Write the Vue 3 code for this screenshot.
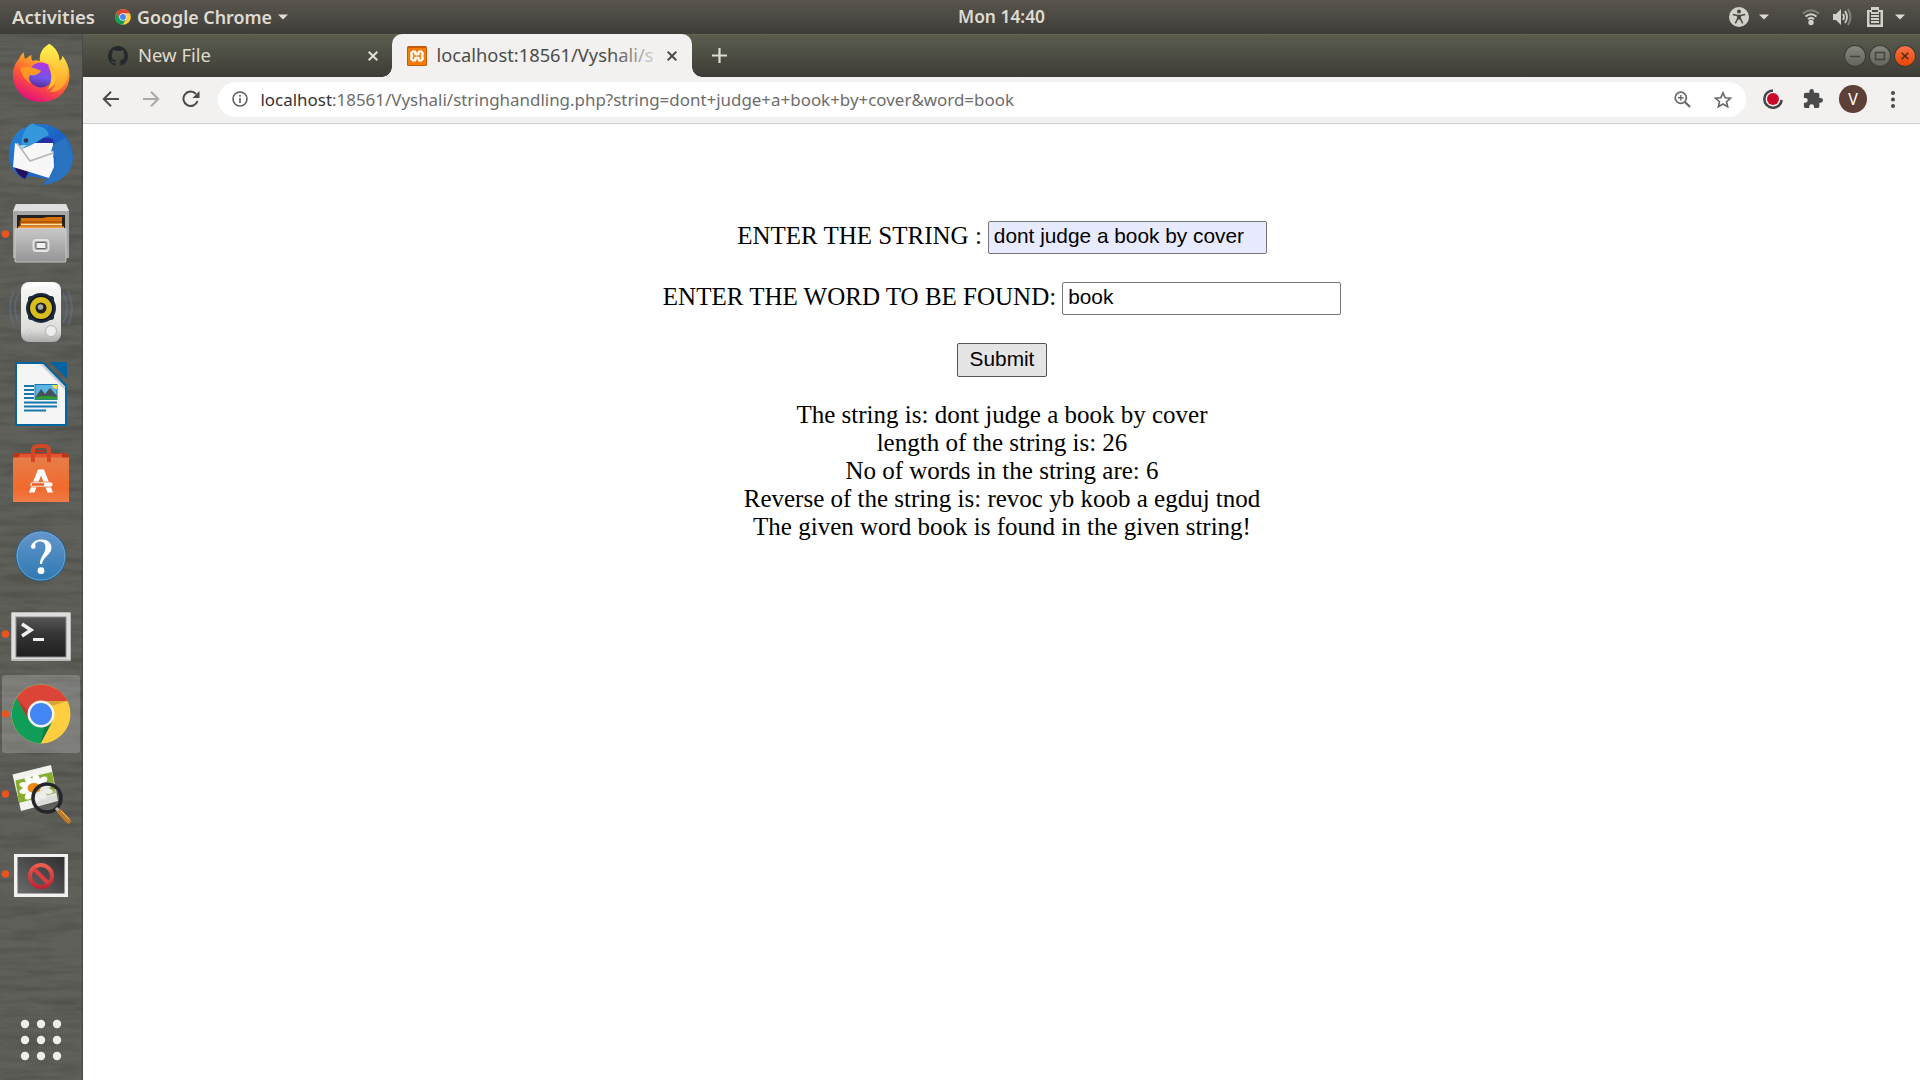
<script setup>
const results = [
  'The string is: dont judge a book by cover',
  'length of the string is: 26',
  'No of words in the string are: 6',
  'Reverse of the string is: revoc yb koob a egduj tnod',
  'The given word book is found in the given string!'
]
const gridDots = [24, 40, 56].flatMap((y) => [25, 41, 57].map((x) => ({ x, y })))
const petals = [0, 36, 72, 108, 144, 180, 216, 252, 288, 324]
</script>

<template>
  <div class="desktop">
    <header class="topbar">
      <div class="side">
        <svg class="activities" width="86" height="34"><text x="0" y="23.5" textLength="83" lengthAdjust="spacingAndGlyphs">Activities</text></svg>
        <svg class="mini" width="16" height="16" viewBox="0 0 60 60">
          <circle cx="30" cy="30" r="29.5" fill="#ffcd40" />
          <path d="M4.5 15A29.5 29.5 0 0 1 55.500 16H30L18 36.500Z" fill="#db4437" />
          <path d="M4.500 15A29.500 29.500 0 0 0 29 59.500L42 37L18 37Z" fill="#0f9d58" />
          <circle cx="30" cy="30" r="14" fill="#f1f1f1" /><circle cx="30" cy="30" r="11" fill="#4285f4" />
        </svg>
        <svg class="app" width="138" height="34"><text x="0" y="23.500" textLength="135" lengthAdjust="spacingAndGlyphs">Google Chrome</text></svg>
        <svg class="tri" width="10" height="6"><path d="M0 .5H10L5 5.500Z" /></svg>
      </div>
      <svg width="88" height="34"><text x="0" y="23" textLength="87" lengthAdjust="spacingAndGlyphs">Mon 14:40</text></svg>
      <div class="side status">
        <svg width="20" height="20" viewBox="0 0 20 20"><circle cx="10" cy="10" r="10" fill="#d3d0ca" /><circle cx="10" cy="4.600" r="2" fill="#4a4741" /><path d="M3.800 7.500L8.500 8.400h3L16.200 7.500M8.700 8.500V11.500L6.300 16.300M11.300 8.500V11.500L13.700 16.300" fill="none" stroke="#4a4741" stroke-width="1.500" /><path d="M8 8h4v4.500H8z" fill="#4a4741" /></svg>
        <svg class="t1" width="10" height="6"><path d="M0 .5H10L5 5.500Z" /></svg>
        <svg class="wifi" width="18" height="18" viewBox="0 0 18 18" fill="none" stroke-width="2"><path d="M1 5.500Q9-1 17 5.500" stroke="#84827c" /><path d="M3.500 8.500Q9 4 14.500 8.500M6 11.200Q9 8.500 12 11.200" stroke="#d3d0ca" /><circle cx="9" cy="14.500" r="2.700" fill="#d3d0ca" /></svg>
        <svg class="vol" width="20" height="18" viewBox="0 0 20 18" fill="none" stroke-width="2"><path d="M1 6h3l5-5v16l-5-5H1z" fill="#d3d0ca" /><path d="M11 6q2 3 0 6M13 3q4 6 0 12" stroke="#d3d0ca" stroke-width="1.800" /><path d="M16 1q5 8 0 16" stroke="#84827c" /></svg>
        <svg class="bat" width="16" height="20" viewBox="0 0 16 20"><path d="M4 0h8v3h4v17H0V3h4z" fill="#d3d0ca" /><path d="M2.500 5H5V3h6v2h2.500v12.500h-11z" fill="#4a4741" /><path d="M4 6h8M4 9h8M4 12h8M4 15h8" stroke="#d3d0ca" stroke-width="1.800" /></svg>
        <svg class="t2" width="10" height="6"><path d="M0 .5H10L5 5.500Z" /></svg>
      </div>
    </header>

    <div class="workspace">
      <nav class="dock">
        <svg class="grain" width="82" height="1046">
          <filter id="wood" x="0" y="0" width="100%" height="100%" color-interpolation-filters="sRGB"><feTurbulence type="fractalNoise" baseFrequency="0.02 0.14" numOctaves="4" seed="8" /><feColorMatrix values="0 0 0 0 .17  0 0 0 0 .17  0 0 0 0 .15  2.2 0 0 0 -.85" /></filter>
          <rect width="82" height="1046" filter="url(#wood)" />
        </svg>
        <div class="apps">
          <!-- Firefox -->
          <svg class="item" viewBox="0 0 82 80">
            <defs>
              <linearGradient id="ffb" x1=".8" y1="0" x2=".35" y2="1"><stop offset="0" stop-color="#ffe93e" /><stop offset=".35" stop-color="#ffab26" /><stop offset=".65" stop-color="#ff5636" /><stop offset="1" stop-color="#e3107b" /></linearGradient>
              <linearGradient id="ffy" x1="0" y1="0" x2="0" y2="1"><stop offset="0" stop-color="#fff44f" /><stop offset="1" stop-color="#ff9a2a" /></linearGradient>
              <linearGradient id="ffp" x1=".6" y1="0" x2=".4" y2="1"><stop offset="0" stop-color="#b833e1" /><stop offset=".6" stop-color="#7156e8" /><stop offset="1" stop-color="#592a9c" /></linearGradient>
            </defs>
            <path d="M49.500 10C55 14 59 18 59.500 27C62 26 62 24 62.500 22C67 28 69.500 34 69.500 41C69.500 57 57 68 41 68S13 56 13 41C13 33 16 28 19 25C20 22 21 20 24 18.500C24 21 24 23 25.500 25C28 23 29 22 31.500 21C31 24 31.500 26 32.500 27C35 26 37 26 40 27C39 20 43 13 49.500 10Z" fill="url(#ffb)" />
            <path d="M49.500 10C55 14 59 18 59.500 27C62 26 62 24 62.500 22C67 29 69 36 67 44C65 53 58 59 50 58C57 51 58 42 54 35C51 30 44 29 40 27C39 20 43 13 49.500 10Z" fill="url(#ffy)" />
            <circle cx="41" cy="41" r="12.500" fill="url(#ffp)" />
            <path d="M20 34Q30 31 41 37Q38 42 30 41Q27 44 31 50Q22 44 20 34Z" fill="#ff9822" />
            <path d="M48 31Q59 36 56 47Q54 53 47 56Q55 45 48 31Z" fill="#ffc22e" />
          </svg>
          <!-- Thunderbird -->
          <svg class="item" viewBox="0 0 82 80">
            <defs><linearGradient id="tb" x1="0" y1="0" x2="1" y2="1"><stop offset="0" stop-color="#258bd7" /><stop offset=".5" stop-color="#1c5fc4" /><stop offset="1" stop-color="#2d7cc4" /></linearGradient></defs>
            <path d="M31 12C47 5 73 18 73 43C73 58 62 69 42 71Q46 68 47 65L30 62L24 65C14 60 9 51 9 42C9 27 16 14 31 12Z" fill="url(#tb)" />
            <path d="M14 52L29 57L25 65Q17 61 14 52Z" fill="#25105c" />
            <path d="M30 28Q39 21 53 25L54 34H29Z" fill="#2030a0" />
            <path d="M15 29L22 33L34 29H53L54 53L49 64L13 53Z" fill="#f7f7f8" />
            <path d="M17 29L30 47L53 39" fill="none" stroke="#b5b5ba" stroke-width="1.500" />
            <path d="M53 31L51 38L55 36L53 44L57 41L54 53L58 50L52 61L57 58L44 70Q70 66 73 44L66 23Z" fill="#2a73c0" />
            <path d="M28 12Q32 7 37 12Q47 13 49 21Q42 24 37 28Q30 32 22 35Q19 24 28 12Z" fill="#3597dc" />
            <circle cx="26" cy="26.500" r="2.300" fill="#29374a" /><path d="M20 31L22 35L27 31Z" fill="#a4d5ee" />
          </svg>
          <!-- Files -->
          <svg class="item" viewBox="0 0 82 80">
            <defs><linearGradient id="fl" x1="0" y1="0" x2="0" y2="1"><stop offset="0" stop-color="#c8c8c8" /><stop offset="1" stop-color="#949494" /></linearGradient></defs>
            <path d="M16 10H66L69 17V64H13V17Z" fill="#a7a7a7" /><path d="M16 10H66L69 17H13Z" fill="#dedede" />
            <path d="M17 21H65V36H17Z" fill="#24201c" />
            <path d="M21 24H43L47 23H62V37H19Z" fill="#d4710b" /><path d="M19 28H62M19 31H63" stroke="#8d4207" stroke-width="1" /><path d="M21 30.500H62" stroke="#ffe0a5" stroke-width="1.500" /><path d="M18 34H64" stroke="#f29a3e" stroke-width="3" />
            <rect x="15" y="34.500" width="51" height="33.500" rx="1" fill="url(#fl)" stroke="#d2d2d2" stroke-width=".8" />
            <rect x="33.500" y="46" width="15" height="11" rx="2.500" fill="#aaa" stroke="#e5e5e5" stroke-width="1.800" /><rect x="36" y="48.500" width="10" height="6" rx="1" fill="#f2f2f2" stroke="#666" />
            <circle cx="5.500" cy="40" r="3.700" fill="#e95420" />
          </svg>
          <!-- Rhythmbox -->
          <svg class="item" viewBox="0 0 82 80">
            <defs><linearGradient id="rb" x1="0" y1="0" x2="0" y2="1"><stop offset="0" stop-color="#fafafa" /><stop offset=".8" stop-color="#dcdcda" /><stop offset="1" stop-color="#aaa" /></linearGradient></defs>
            <g fill="none" stroke="#5f7fa3" stroke-width="1.500" opacity=".45"><path d="M19 19Q11 34 19 49M14 17Q6 34 14 51M63 19Q71 34 63 49M68 17Q76 34 68 51" /></g>
            <rect x="21" y="8" width="40" height="60" rx="8" fill="url(#rb)" /><path d="M25 14Q41 6 57 14" stroke="#fff" stroke-width="3" fill="none" />
            <rect x="28" y="22" width="26" height="24" rx="3" fill="#1d2630" /><circle cx="41" cy="34" r="15" fill="#1c2a40" /><circle cx="41" cy="34" r="12.500" fill="#111" /><circle cx="41" cy="34" r="11" fill="#d8bd21" /><circle cx="41" cy="34" r="5.500" fill="#222" /><circle cx="40.500" cy="33" r="2.800" fill="#aaa" />
            <circle cx="51" cy="57" r="5.500" fill="#eee" stroke="#b3b3b1" /><circle cx="29" cy="58" r="2" fill="#ddd" stroke="#c8c8c8" />
          </svg>
          <!-- Writer -->
          <svg class="item" viewBox="0 0 82 80">
            <path d="M16 8H44L67 31V71Q67 72 66 72H16Q15 72 15 71V9Q15 8 16 8Z" fill="#02659f" />
            <path d="M17 10H43L65 32.500V70H17Z" fill="#f5f5f5" /><path d="M43 10L65 32.500V36L40 10Z" fill="#c7cfd4" />
            <path d="M50 8H66L67 9V25Z" fill="#0363a3" />
            <path d="M24 32H34M24 36H34M24 40H34M24 44H34M24 48.500H57M24 52.500H57M24 56.500H46" stroke="#1675ad" stroke-width="2" />
            <rect x="35" y="30.500" width="22" height="15" fill="#5cb5e4" stroke="#187ab4" /><path d="M35.500 43L41 35L45 40L50 34L57 42V45H36Z" fill="#46525a" /><path d="M36 43Q45 41 57 43V45.500H36Z" fill="#339a36" /><path d="M52 31H57V35Q53 35 52 31Z" fill="#ffe14b" />
          </svg>
          <!-- Software -->
          <svg class="item" viewBox="0 0 82 80">
            <defs><linearGradient id="sw" x1="0" y1="0" x2="0" y2="1"><stop offset="0" stop-color="#e67d48" /><stop offset=".7" stop-color="#f16a2c" /><stop offset="1" stop-color="#ee7c48" /></linearGradient></defs>
            <path d="M14 19H68L69 24H13Z" fill="#b9371b" /><path d="M20 20H62V24H18Z" fill="#e5542c" /><rect x="13" y="23.500" width="56" height="44.500" fill="url(#sw)" />
            <path d="M33 28V17Q33 12 38 12H44Q49 12 49 17V28" fill="none" stroke="#d24824" stroke-width="4" /><path d="M36 17H46" stroke="#b5371b" stroke-width="2" />
            <path d="M29 58.500L38 35.500H44L53 58.500H47.500L41 41.500L34.500 58.500Z" fill="#fff" /><rect x="30" y="48" width="23" height="5" rx="2.500" fill="#fff" stroke="#ee6c30" stroke-width=".8" /><path d="M32 50.500H44" stroke="#e8592a" stroke-width="2.500" />
          </svg>
          <!-- Help -->
          <svg class="item" viewBox="0 0 82 80">
            <defs><linearGradient id="hp" x1="0" y1="0" x2="0" y2="1"><stop offset="0" stop-color="#6397cb" /><stop offset="1" stop-color="#2e78b2" /></linearGradient></defs>
            <circle cx="41" cy="42" r="25" fill="url(#hp)" stroke="#235f91" /><circle cx="41" cy="42" r="24" fill="none" stroke="#77a9d5" stroke-width=".8" />
            <path d="M31 32C32.500 28 36 25.500 41.500 25.500C47.500 25.500 51.500 28.500 51.500 33.500C51.500 41 43.500 42 42 50H40C39.500 43 45.500 40 45.500 33.500C45.500 29.500 43.500 27.500 40 27.500C37 27.500 34.500 29 35.500 32C36 36 30 35.500 31 32Z" fill="#fff" /><circle cx="41" cy="56.700" r="3.400" fill="#fff" />
          </svg>
          <!-- Terminal -->
          <svg class="item" viewBox="0 0 82 80">
            <defs><linearGradient id="tm" x1="0" y1="0" x2="0" y2="1"><stop offset="0" stop-color="#555" /><stop offset=".4" stop-color="#363636" /><stop offset="1" stop-color="#1f1f1f" /></linearGradient></defs>
            <rect x="11" y="18" width="60" height="49" rx="1.500" fill="#b9b9b9" /><rect x="12" y="19" width="58" height="46" fill="#dedede" /><rect x="15.500" y="22.500" width="51" height="41" fill="#888" /><rect x="16.500" y="23.500" width="49" height="39" fill="url(#tm)" />
            <path d="M22 30L31 36L22 42" fill="none" stroke="#f0f0f0" stroke-width="3.500" /><path d="M33 45.500H44" stroke="#f0f0f0" stroke-width="3" />
            <circle cx="5.500" cy="40" r="3.700" fill="#e95420" />
          </svg>
          <!-- Chrome -->
          <svg class="item" viewBox="0 0 82 80">
            <rect x="2" y="1" width="78" height="78" rx="3" fill="#fff" fill-opacity=".2" />
            <circle cx="41" cy="40" r="29.500" fill="#ffcd40" />
            <path d="M16.500 24A29.500 29.500 0 0 1 67.500 27H41L29 46Z" fill="#db4437" />
            <path d="M16.500 24A29.500 29.500 0 0 0 40.500 69.500L52 48L41 52L29 46Z" fill="#0f9d58" />
            <path d="M41 27H67L52 32Z" fill="#dba733" /><path d="M16.500 24L29 38L28 45Z" fill="#b33b2d" /><path d="M52 48L40.500 69.500L44 53Z" fill="#0c8047" />
            <circle cx="41" cy="40" r="13.500" fill="#f4f4f4" /><circle cx="41" cy="40" r="11" fill="#4285f4" />
            <circle cx="5.500" cy="40" r="3.700" fill="#e95420" />
          </svg>
          <!-- Image viewer -->
          <svg class="item" viewBox="0 0 82 80">
            <path d="M12.500 20.500L51 11L58 47L21 57Z" fill="#f2f2ee" /><path d="M15.500 26.500L52 18L56 39L19 49Z" fill="#86ad2e" />
            <g transform="translate(36 34)" fill="#fff"><ellipse v-for="a in petals" :key="a" cx="0" cy="-9" rx="3.200" ry="5.500" :transform="`scale(1.2 .95) rotate(${a})`" /><ellipse cx="-2" rx="6.500" ry="5" fill="#e88a13" /></g>
            <circle cx="47" cy="44" r="14" fill="#60645a" fill-opacity=".15" stroke="#24272a" stroke-width="3.500" /><path d="M37 47Q44 36 57 39" stroke="#fff" stroke-opacity=".25" stroke-width="6" fill="none" />
            <path d="M56 54L60 58" stroke="#bbb" stroke-width="3" /><path d="M60 58L68.500 67" stroke="#c37a26" stroke-width="5" stroke-linecap="round" /><path d="M61 57L69 65" stroke="#efbd6c" stroke-width="1" />
            <circle cx="5.500" cy="40" r="3.700" fill="#e95420" />
          </svg>
          <!-- Blocked display -->
          <svg class="item" viewBox="0 0 82 80">
            <defs><linearGradient id="bd" x1="0" y1="1" x2="1" y2="0"><stop offset="0" stop-color="#6b6b6b" /><stop offset="1" stop-color="#2f2f2f" /></linearGradient><linearGradient id="br" x1="0" y1="0" x2="0" y2="1"><stop offset="0" stop-color="#ef6150" /><stop offset="1" stop-color="#bd1f33" /></linearGradient></defs>
            <rect x="14" y="20" width="54" height="43" fill="#f1f1f1" /><rect x="17.500" y="23" width="47" height="36.500" fill="url(#bd)" />
            <path fill-rule="evenodd" d="M41 29A13 13 0 1 0 41 55A13 13 0 1 0 41 29ZM41 33A9 9 0 1 1 41 51A9 9 0 1 1 41 33Z" fill="url(#br)" /><path d="M34 35L48 49" stroke="#dc3c40" stroke-width="4" />
            <circle cx="5.500" cy="40" r="3.700" fill="#e95420" />
          </svg>
        </div>
        <svg class="item" viewBox="0 0 82 80"><circle v-for="d in gridDots" :key="`${d.x}-${d.y}`" :cx="d.x" :cy="d.y" r="4.200" fill="#eeeeec" /></svg>
      </nav>

      <section class="browser">
        <div class="tabs">
          <div class="tab idle">
            <svg width="20" height="20" viewBox="0 0 16 16"><path fill="#24292e" d="M8 0C3.580 0 0 3.580 0 8c0 3.540 2.290 6.530 5.470 7.590.4.070.55-.17.55-.38 0-.19-.01-.82-.01-1.490-2.010.37-2.530-.49-2.690-.94-.09-.23-.48-.94-.82-1.130-.28-.15-.68-.52-.01-.53.63-.01 1.080.58 1.230.82.72 1.210 1.870.87 2.330.66.070-.52.28-.87.51-1.070-1.780-.2-3.640-.89-3.640-3.950 0-.87.31-1.590.82-2.150-.08-.2-.36-1.020.08-2.120 0 0 .67-.21 2.200.82.64-.18 1.320-.27 2-.27s1.360.09 2 .27c1.530-1.040 2.200-.82 2.200-.82.44 1.100.16 1.920.08 2.120.51.56.82 1.270.82 2.150 0 3.070-1.870 3.750-3.650 3.950.29.25.54.73.54 1.480 0 1.070-.01 1.930-.01 2.200 0 .21.15.46.55.38A8.010 8.010 0 0 0 16 8c0-4.420-3.580-8-8-8Z" /></svg>
            <svg class="label" width="230" height="43"><text x="0" y="27.500" textLength="73" lengthAdjust="spacingAndGlyphs">New File</text></svg>
            <svg class="close" width="10" height="10"><path d="M.7.7L9.300 9.300M9.300.7L.7 9.300" /></svg>
          </div>
          <div class="tab active">
            <svg width="20" height="20" viewBox="0 0 20 20"><rect width="20" height="20" rx="1.500" fill="#c65a05" /><rect x="1" y="2" width="18" height="17" rx="1" fill="#f57a08" /><path d="M6 5.500Q9 5 8.500 8Q10 8.800 11.500 8Q11 5 14 5.500Q17 7 14.800 10Q17 13 14 14.500Q11 15 11.500 12Q10 11.200 8.500 12Q9 15 6 14.500Q3 13 5.200 10Q3 7 6 5.500Z" fill="none" stroke="#fff" stroke-width="2.400" /></svg>
            <svg class="label" width="220" height="43">
              <defs><linearGradient id="fade" gradientUnits="userSpaceOnUse" x1="175" y1="0" x2="219" y2="0"><stop offset="0" stop-color="#4b4b49" /><stop offset="1" stop-color="#4b4b49" stop-opacity=".15" /></linearGradient></defs>
              <text x="-.5" y="27.500" textLength="217" lengthAdjust="spacingAndGlyphs" fill="url(#fade)">localhost:18561/Vyshali/s</text>
            </svg>
            <svg class="close" width="10" height="10"><path d="M.7.7L9.300 9.300M9.300.7L.7 9.300" /></svg>
          </div>
          <svg class="plus" width="15" height="15"><path d="M7.500 0V15M0 7.500H15" stroke="#deddd0" stroke-width="2.200" /></svg>
          <div class="winbtns">
            <span class="wb"><svg width="20" height="20"><path d="M5 10.500H15" stroke="#42433c" stroke-width="1.500" /></svg></span>
            <span class="wb"><svg width="20" height="20"><rect x="5.500" y="6.500" width="9" height="7" fill="none" stroke="#42433c" stroke-width="1.500" /></svg></span>
            <span class="wb x"><svg width="20" height="20"><path d="M6.700 6.700L13.300 13.300M13.300 6.700L6.700 13.300" stroke="#512515" stroke-width="1.500" /></svg></span>
          </div>
        </div>

        <div class="toolbar">
          <svg class="back" width="18" height="16" viewBox="0 0 18 16"><path d="M17 8H2M9 .8L1.800 8L9 15.200" fill="none" stroke="#4a4a4a" stroke-width="2" /></svg>
          <svg class="fwd" width="18" height="16" viewBox="0 0 18 16"><path d="M1 8H16M9 .8L16.200 8L9 15.200" fill="none" stroke="#aaa9a7" stroke-width="2" /></svg>
          <svg class="reload" width="18" height="18" viewBox="0 0 18 18"><path d="M15.500 11A7.200 7.200 0 1 1 14 4" fill="none" stroke="#4a4a4a" stroke-width="2" /><path d="M17.500 1V8H10.500Z" fill="#4a4a4a" /></svg>
          <div class="omnibox">
            <svg class="info" width="16" height="16" viewBox="0 0 16 16"><circle cx="8" cy="8" r="7" fill="none" stroke="#616161" stroke-width="1.600" /><path d="M8 7V12M8 4V5.700" stroke="#616161" stroke-width="1.700" /></svg>
            <svg class="url" width="756" height="35"><text x=".5" y="23.500" textLength="753.500" lengthAdjust="spacingAndGlyphs"><tspan fill="#333">localhost</tspan><tspan fill="#6d6d6d">:18561/Vyshali/stringhandling.php?string=dont+judge+a+book+by+cover&amp;word=book</tspan></text></svg>
            <svg class="mag" width="17" height="17" viewBox="0 0 17 17" fill="none" stroke="#686868"><circle cx="6.800" cy="6.800" r="5.600" stroke-width="1.700" /><path d="M11 11L16 16" stroke-width="2.200" /><path d="M6.800 4V9.600M4 6.800H9.600" stroke-width="1.400" /></svg>
            <svg class="star" width="18" height="17" viewBox="0 0 18 17"><path d="M9 1.800L11.200 6.700L16.500 7.200L12.500 10.700L13.700 15.800L9 13L4.300 15.800L5.500 10.700L1.500 7.200L6.800 6.700Z" fill="none" stroke="#686868" stroke-width="1.600" /></svg>
          </div>
          <svg class="ext" width="20" height="20" viewBox="0 0 20 20"><path d="M10 1.400A8.700 8.700 0 1 0 18.700 11" fill="none" stroke="#45454a" stroke-width="2.500" /><circle cx="10" cy="10" r="6" fill="#cb0b2b" /></svg>
          <svg class="puzzle" width="20" height="20" viewBox="1 1 22 22"><path fill="#4a4a4a" d="M20.500 11H19V7c0-1.100-.9-2-2-2h-4V3.500a2.500 2.500 0 0 0-5 0V5H4c-1.100 0-2 .9-2 2v3.800h1.500a2.700 2.700 0 0 1 0 5.400H2V20c0 1.100.9 2 2 2h3.800v-1.500a2.700 2.700 0 0 1 5.400 0V22H17c1.100 0 2-.9 2-2v-4h1.500a2.500 2.500 0 0 0 0-5Z" /></svg>
          <span class="avatar">V</span>
          <svg class="menu" width="4" height="17" fill="#4a4a4a"><circle cx="2" cy="2" r="2" /><circle cx="2" cy="8.500" r="2" /><circle cx="2" cy="15" r="2" /></svg>
        </div>

        <main class="page">
          <div class="row"><span>ENTER THE STRING :</span><input class="filled" value="dont judge a book by cover" /></div>
          <div class="row"><span>ENTER THE WORD TO BE FOUND:</span><input value="book" /></div>
          <div class="row"><button>Submit</button></div>
          <div class="results"><div v-for="r in results" :key="r">{{ r }}</div></div>
        </main>
      </section>
    </div>
  </div>
</template>

<style>
body { margin: 0; overflow: hidden; }
</style>

<style scoped>
* { box-sizing: border-box; }
svg { display: block; flex: none; }
.desktop { width: 1920px; height: 1080px; display: flex; flex-direction: column; background: #fff; overflow: hidden; }
.topbar { height: 34px; flex: none; display: grid; grid-template-columns: 958px 88px 874px; background: linear-gradient(#59554e, #3e3d38); font: 600 17.500px "Noto Sans", "Open Sans", sans-serif; fill: #dfdbd2; }
.side { display: flex; align-items: center; }
.activities { margin-left: 12px; }
.mini { margin-left: 17px; }
.app { margin-left: 6px; }
.tri { margin-left: 3px; }
.status { justify-content: flex-end; padding-right: 15px; }
.t1 { margin-left: 10px; }
.wifi { margin-left: 33px; }
.vol { margin-left: 12px; }
.bat { margin-left: 15px; }
.t2 { margin-left: 12px; }
.workspace { flex: 1; display: flex; min-height: 0; }
.dock { width: 83px; flex: none; position: relative; display: flex; flex-direction: column; justify-content: space-between; background: #60605b; border-right: 1px solid #474743; }
.grain { position: absolute; left: 0; top: 0; opacity: .26; }
.item { position: relative; width: 82px; height: 80px; }
.browser { flex: 1; min-width: 0; display: flex; flex-direction: column; }
.tabs { height: 43px; flex: none; display: flex; align-items: center; background: linear-gradient(#5b5d4e, #3d3c37); box-shadow: inset 0 1px #666451; font: 17.500px "Noto Sans", "Open Sans", sans-serif; }
.tab { height: 43px; display: flex; align-items: center; }
.idle { width: 309px; padding-left: 25px; fill: #dfdbcd; }
.label { margin-left: 10px; }
.close { stroke-width: 2; stroke: #e4e1d5; }
.idle .close { margin-left: 0; }
.active { position: relative; width: 300px; padding-left: 15px; background: #f2f1f0; border-radius: 10px 10px 0 0; }
.active::before, .active::after { content: ""; position: absolute; bottom: 0; width: 10px; height: 10px; }
.active::before { left: -10px; background: radial-gradient(circle at 0 0, transparent 9.500px, #f2f1f0 10px); }
.active::after { right: -10px; background: radial-gradient(circle at 100% 0, transparent 9.500px, #f2f1f0 10px); }
.active .close { margin-left: 9.500px; stroke: #4b4b49; }
.plus { margin-left: 20px; }
.winbtns { margin-left: auto; display: flex; gap: 5px; padding-right: 5.500px; }
.wb { width: 20px; height: 20px; border-radius: 50%; background: linear-gradient(#87877f, #62635a); box-shadow: 0 0 0 1px #3a3b34; }
.x { background: linear-gradient(#f8734b, #e94503); }
.toolbar { height: 47px; flex: none; display: flex; align-items: center; background: #f2f1f0; border-bottom: 1px solid #cfcecd; padding: 0 0 2px 18.500px; }
.fwd { margin-left: 22px; }
.reload { margin-left: 22.500px; }
.omnibox { width: 1528px; height: 35px; margin-left: 18px; border-radius: 18px; background: #fff; display: flex; align-items: center; font: 16px "Noto Sans", "Open Sans", sans-serif; }
.info { margin-left: 14px; }
.url { margin-left: 12px; }
.mag { margin-left: auto; }
.star { margin: 0 14px 0 23px; }
.ext { margin-left: 17px; }
.puzzle { margin-left: 20px; }
.avatar { width: 28px; height: 28px; margin-left: 16px; border-radius: 50%; background: #5d4037; color: #fff; font: 16px/28px "Noto Sans", sans-serif; text-align: center; }
.menu { margin-left: 24px; }
.page { flex: 1; padding: 97px 0 0 1px; font: 25px/28px "Liberation Serif", "Times New Roman", serif; color: #000; text-align: center; }
.row { height: 33px; margin-bottom: 28.300px; display: flex; justify-content: center; align-items: center; gap: 6px; }
.row > span { position: relative; top: -2px; }
input { width: 279px; height: 33px; border: 1px solid #767676; border-radius: 2px; padding: 0 5px 3px; font: 20.830px "Liberation Sans", Arial, sans-serif; color: #000; background: #fff; outline: none; }
.filled { background: #e8ebff; }
button { width: 90px; height: 34px; padding: 0 0 2px; border: 1px solid #555; border-radius: 2px; background: #e5e5e5; font: 20.830px "Liberation Sans", Arial, sans-serif; color: #000; }
.results { line-height: 28px; margin-top: -4px; }
</style>
